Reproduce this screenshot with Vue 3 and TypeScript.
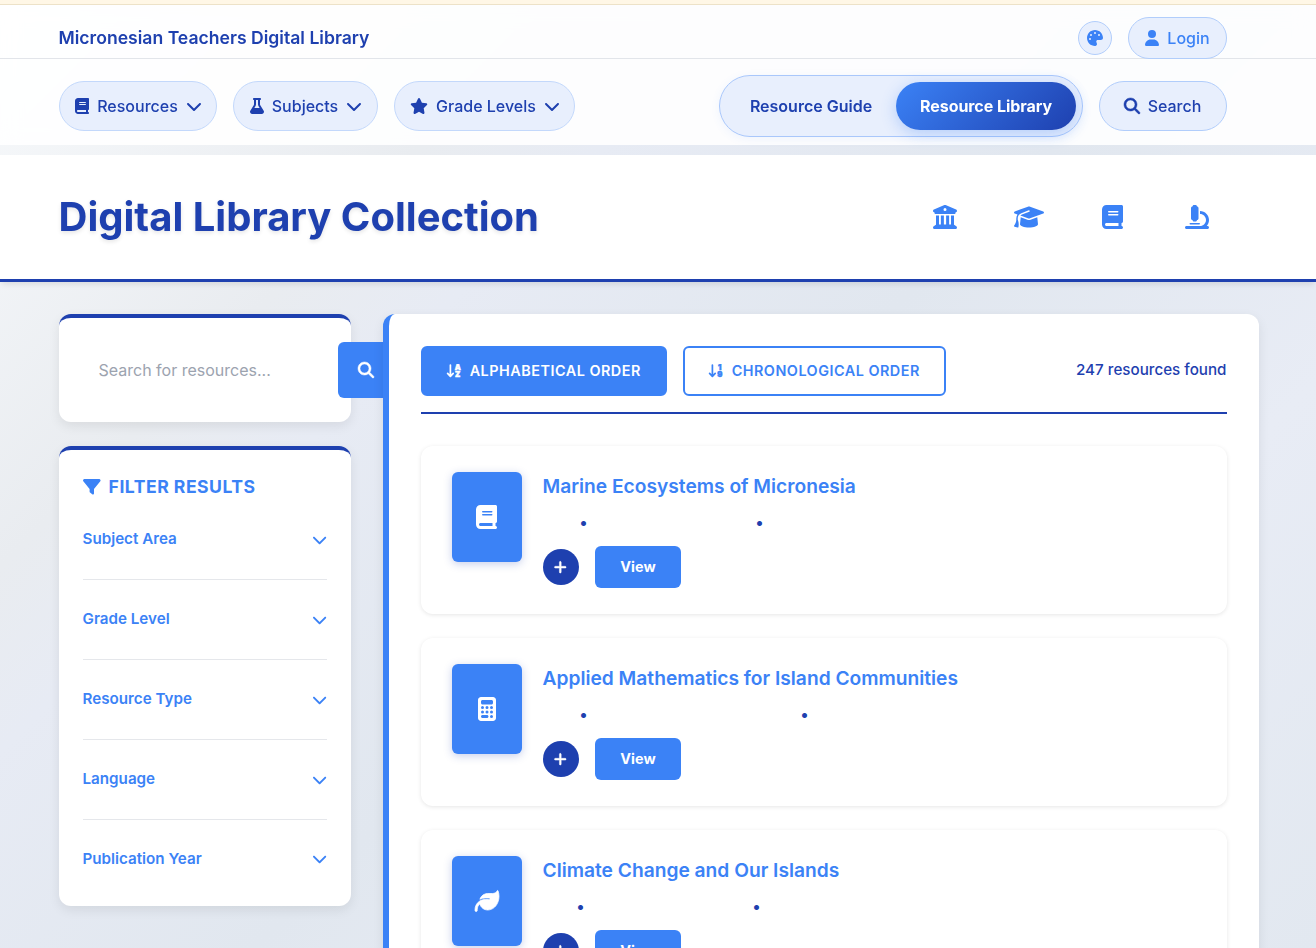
<script setup lang="ts">
interface Glyph { w: number; d: string }

const icons: Record<string, Glyph> = {
  book: { w: 448, d: 'M96 0C43 0 0 43 0 96V416c0 53 43 96 96 96H384h32c17.7 0 32-14.3 32-32s-14.3-32-32-32V384c17.7 0 32-14.3 32-32V32c0-17.7-14.3-32-32-32H384 96zm0 384H352v64H96c-17.7 0-32-14.3-32-32s14.3-32 32-32zm32-240c0-8.8 7.2-16 16-16H336c8.8 0 16 7.2 16 16s-7.2 16-16 16H144c-8.8 0-16-7.2-16-16zm16 48H336c8.8 0 16 7.2 16 16s-7.2 16-16 16H144c-8.8 0-16-7.2-16-16s7.2-16 16-16z' },
  flask: { w: 448, d: 'M288 0H160 128C110.3 0 96 14.3 96 32s14.3 32 32 32V196.8c0 11.8-3.3 23.5-9.5 33.5L10.3 406.2C3.6 417.2 0 429.7 0 442.6C0 480.9 31.1 512 69.4 512H378.6c38.3 0 69.4-31.1 69.4-69.4c0-12.8-3.6-25.4-10.3-36.4L329.5 230.4c-6.2-10.1-9.5-21.7-9.5-33.5V64c17.7 0 32-14.3 32-32s-14.3-32-32-32H288zM192 196.8V64h64V196.8c0 23.7 6.6 46.9 19 67.1L309.5 320h-171L173 263.9c12.4-20.2 19-43.4 19-67.1z' },
  star: { w: 576, d: 'M316.9 18C311.6 7 300.4 0 288.1 0s-23.4 7-28.8 18L195 150.3 51.4 171.5c-12 1.8-22 10.2-25.7 21.7s-.7 24.2 7.9 32.7L137.8 329 113.2 474.7c-2 12 3 24.2 12.9 31.3s23 8 33.8 2.3l128.3-68.5 128.3 68.5c10.8 5.7 23.9 4.9 33.8-2.3s14.9-19.3 12.9-31.3L438.5 329 542.7 225.9c8.6-8.5 11.7-21.2 7.9-32.7s-13.7-19.9-25.7-21.7L381.2 150.3 316.9 18z' },
  chevron: { w: 512, d: 'M233.4 406.6c12.5 12.5 32.8 12.5 45.3 0l192-192c12.5-12.5 12.5-32.8 0-45.3s-32.8-12.5-45.3 0L256 338.7 86.6 169.4c-12.5-12.5-32.8-12.5-45.3 0s-12.5 32.8 0 45.3l192 192z' },
  search: { w: 512, d: 'M416 208c0 45.9-14.9 88.3-40 122.7L502.6 457.4c12.5 12.5 12.5 32.8 0 45.3s-32.8 12.5-45.3 0L330.7 376c-34.4 25.2-76.8 40-122.7 40C93.1 416 0 322.9 0 208S93.1 0 208 0S416 93.1 416 208zM208 352a144 144 0 1 0 0-288 144 144 0 1 0 0 288z' },
  user: { w: 448, d: 'M224 256A128 128 0 1 0 224 0a128 128 0 1 0 0 256zm-45.7 48C79.8 304 0 383.8 0 482.3C0 498.7 13.3 512 29.7 512H418.3c16.4 0 29.7-13.3 29.7-29.7C448 383.8 368.2 304 269.7 304H178.3z' },
  palette: { w: 512, d: 'M512 256c0 .9 0 1.8 0 2.7c-.4 36.5-33.6 61.3-70.1 61.3H344c-26.5 0-48 21.5-48 48c0 3.4 .4 6.7 1 9.9c2.1 10.2 6.5 20 10.8 29.9c6.1 13.8 12.1 27.5 12.1 42c0 31.8-21.6 60.7-53.4 62c-3.5 .1-7 .2-10.6 .2C114.6 512 0 397.4 0 256S114.6 0 256 0S512 114.6 512 256zM128 288a32 32 0 1 0 -64 0 32 32 0 1 0 64 0zm0-96a32 32 0 1 0 0-64 32 32 0 1 0 0 64zM288 96a32 32 0 1 0 -64 0 32 32 0 1 0 64 0zm96 96a32 32 0 1 0 0-64 32 32 0 1 0 0 64z' },
  columns: { w: 512, d: 'M243.4 2.6l-224 96c-14 6-21.8 21-18.7 35.8S16.8 160 32 160v8c0 13.3 10.7 24 24 24H456c13.3 0 24-10.7 24-24v-8c15.2 0 28.3-10.7 31.3-25.6s-4.8-29.9-18.7-35.8l-224-96c-8-3.4-17.2-3.4-25.2 0zM128 224H64V420.3c-.6 .3-1.2 .7-1.8 1.1l-48 32c-11.7 7.8-17 22.4-12.9 35.9S17.9 512 32 512H480c14.1 0 26.5-9.2 30.6-22.7s-1.1-28.1-12.9-35.9l-48-32c-.6-.4-1.2-.7-1.8-1.1V224H384V416H344V224H280V416H232V224H168V416H128V224zM256 64a32 32 0 1 1 0 64 32 32 0 1 1 0-64z' },
  cap: { w: 640, d: 'M320 32c-8.1 0-16.1 1.4-23.7 4.1L15.8 137.4C6.3 140.9 0 149.9 0 160s6.3 19.1 15.8 22.6l57.9 20.9C57.3 229.3 48 259.8 48 291.9v28.1c0 28.4-10.8 57.7-22.3 80.8c-6.5 13-13.9 25.8-22.5 37.6C0 442.7-.9 448.3 .9 453.4s6 8.9 11.2 10.2l64 16c4.2 1.1 8.7 .3 12.4-2s6.3-6.1 7.1-10.4c8.6-42.8 4.3-81.2-2.1-108.7C90.3 344.3 86 329.8 80 316.5V291.9c0-30.2 10.2-58.7 27.9-81.5c12.9-15.5 29.6-28 49.2-35.7l157-61.7c8.2-3.2 17.5 .8 20.7 9s-.8 17.5-9 20.7l-157 61.7c-12.4 4.9-23.3 12.4-32.2 21.6l159.6 57.6c7.6 2.7 15.6 4.1 23.7 4.1s16.1-1.4 23.7-4.1L624.2 182.6c9.5-3.4 15.8-12.5 15.8-22.6s-6.3-19.1-15.8-22.6L343.7 36.1C336.1 33.4 328.1 32 320 32zM128 408c0 35.3 86 72 192 72s192-36.7 192-72L496.7 262.6 354.5 314c-11.1 4-22.8 6-34.5 6s-23.5-2-34.5-6L143.3 262.6 128 408z' },
  microscope: { w: 512, d: 'M160 32c0-17.7 14.3-32 32-32h32c17.7 0 32 14.3 32 32c17.7 0 32 14.3 32 32V288c0 17.7-14.3 32-32 32c0 17.7-14.3 32-32 32H192c-17.7 0-32-14.3-32-32c-17.7 0-32-14.3-32-32V64c0-17.7 14.3-32 32-32zM32 448H320c70.7 0 128-57.3 128-128s-57.3-128-128-128V128c106 0 192 86 192 192c0 49.2-18.5 94-48.9 128H480c17.7 0 32 14.3 32 32s-14.3 32-32 32H320 32c-17.7 0-32-14.3-32-32s14.3-32 32-32zm80-64H304c8.8 0 16 7.2 16 16s-7.2 16-16 16H112c-8.8 0-16-7.2-16-16s7.2-16 16-16z' },
  filter: { w: 512, d: 'M3.9 54.9C10.5 40.9 24.5 32 40 32H472c15.5 0 29.5 8.9 36.1 22.9s4.6 30.5-5.2 42.5L320 320.9V448c0 12.1-6.8 23.2-17.7 28.6s-23.8 4.3-33.5-3l-64-48c-8.1-6-12.8-15.5-12.8-25.6V320.9L9 97.3C-.7 85.4-2.8 68.8 3.9 54.9z' },
  calculator: { w: 384, d: 'M64 0C28.7 0 0 28.7 0 64V448c0 35.3 28.7 64 64 64H320c35.3 0 64-28.7 64-64V64c0-35.3-28.7-64-64-64H64zM96 64H288c17.7 0 32 14.3 32 32v32c0 17.7-14.3 32-32 32H96c-17.7 0-32-14.3-32-32V96c0-17.7 14.3-32 32-32zm32 160a32 32 0 1 1 -64 0 32 32 0 1 1 64 0zM96 352a32 32 0 1 1 0-64 32 32 0 1 1 0 64zM64 416c0-17.7 14.3-32 32-32h96c17.7 0 32 14.3 32 32s-14.3 32-32 32H96c-17.7 0-32-14.3-32-32zM192 256a32 32 0 1 1 0-64 32 32 0 1 1 0 64zm32 64a32 32 0 1 1 -64 0 32 32 0 1 1 64 0zm64-64a32 32 0 1 1 0-64 32 32 0 1 1 0 64zm32 64a32 32 0 1 1 -64 0 32 32 0 1 1 64 0zM288 448a32 32 0 1 1 0-64 32 32 0 1 1 0 64z' },
  leaf: { w: 512, d: 'M272 96c-78.6 0-145.1 51.5-167.7 122.5c33.6-17 71.5-26.5 111.7-26.5h88c8.8 0 16 7.2 16 16s-7.2 16-16 16H288 216s0 0 0 0c-16.6 0-32.7 1.9-48.3 5.4c-25.9 5.9-49.9 16.4-71.4 30.7c0 0 0 0 0 0C38.3 298.8 0 364.9 0 440v16c0 13.3 10.7 24 24 24s24-10.7 24-24V440c0-48.7 20.7-92.5 53.8-123.2C121.6 392.3 190.3 448 272 448l1 0c132.1-.7 239-130.9 239-291.4c0-42.6-7.5-83.1-21.1-119.6c-2.6-6.9-12.7-6.6-16.2-.1C455.9 72.1 418.7 96 376 96L272 96z' },
  plus: { w: 448, d: 'M256 80c0-17.7-14.3-32-32-32s-32 14.3-32 32V224H48c-17.7 0-32 14.3-32 32s14.3 32 32 32H192V432c0 17.7 14.3 32 32 32s32-14.3 32-32V288H400c17.7 0 32-14.3 32-32s-14.3-32-32-32H256V80z' },
}

const menus = [
  { label: 'Resources', icon: 'book', cls: 'm-resources' },
  { label: 'Subjects', icon: 'flask', cls: 'm-subjects' },
  { label: 'Grade Levels', icon: 'star', cls: 'm-grades' },
]
const heroIcons = ['columns', 'cap', 'book', 'microscope']
const filters = ['Subject Area', 'Grade Level', 'Resource Type', 'Language', 'Publication Year']
const sorts = [
  { label: 'Alphabetical Order', top: 'A', bottom: 'Z', active: true },
  { label: 'Chronological Order', top: '1', bottom: '9', active: false },
]
const resources = [
  { title: 'Marine Ecosystems of Micronesia', icon: 'book', cols: [36.6, 167] },
  { title: 'Applied Mathematics for Island Communities', icon: 'calculator', cols: [36.6, 212] },
  { title: 'Climate Change and Our Islands', icon: 'leaf', cols: [33.6, 167] },
]
const box = (name: string) => `0 0 ${icons[name].w} 512`
</script>

<template>
  <div class="page">
    <div class="notice"></div>
    <header class="header">
      <div class="topbar">
        <span class="brand">Micronesian Teachers Digital Library</span>
        <div class="account">
          <button class="pill theme"><svg class="ic" :viewBox="box('palette')"><path :d="icons.palette.d" /></svg></button>
          <button class="pill login"><svg class="ic" :viewBox="box('user')"><path :d="icons.user.d" /></svg>Login</button>
        </div>
      </div>
      <nav class="nav">
        <div class="menus">
          <button v-for="m in menus" :key="m.label" class="pill menu" :class="m.cls">
            <svg class="ic" :viewBox="box(m.icon)"><path :d="icons[m.icon].d" /></svg>
            <span>{{ m.label }}</span>
            <svg class="ic chev" :viewBox="box('chevron')"><path :d="icons.chevron.d" /></svg>
          </button>
        </div>
        <div class="right">
          <div class="switch">
            <a class="tab">Resource Guide</a>
            <a class="tab on">Resource Library</a>
          </div>
          <button class="pill find"><svg class="ic heavy" :viewBox="box('search')"><path :d="icons.search.d" /></svg>Search</button>
        </div>
      </nav>
    </header>

    <section class="hero">
      <h1>Digital Library Collection</h1>
      <div class="hero-icons">
        <span v-for="h in heroIcons" :key="h"><svg class="ic" :viewBox="box(h)"><path :d="icons[h].d" /></svg></span>
      </div>
    </section>

    <div class="layout">
      <aside class="side">
        <div class="card searchbox">
          <span class="placeholder">Search for resources...</span>
          <button class="go"><svg class="ic heavy" :viewBox="box('search')"><path :d="icons.search.d" /></svg></button>
        </div>
        <div class="card filters">
          <h3><svg class="ic" :viewBox="box('filter')"><path :d="icons.filter.d" /></svg>Filter Results</h3>
          <div v-for="f in filters" :key="f" class="frow">
            <span>{{ f }}</span>
            <svg class="ic" :viewBox="box('chevron')"><path :d="icons.chevron.d" /></svg>
          </div>
        </div>
      </aside>

      <main class="main">
        <div class="toolbar">
          <button v-for="s in sorts" :key="s.label" class="sort" :class="{ active: s.active }">
            <svg class="sort-ic" viewBox="0 0 16 14">
              <path d="M4.4 1v11M1.6 9.4l2.8 3 2.8-3" />
              <text x="11.7" y="6.2">{{ s.top }}</text>
              <text x="11.7" y="13.1">{{ s.bottom }}</text>
            </svg>
            <span>{{ s.label }}</span>
          </button>
          <span class="count">247 resources found</span>
        </div>
        <article v-for="r in resources" :key="r.title" class="item">
          <div class="thumb"><svg class="ic" :class="{ heavy: r.icon === 'leaf' }" :viewBox="box(r.icon)"><path :d="icons[r.icon].d" /></svg></div>
          <div class="body">
            <h4>{{ r.title }}</h4>
            <div class="meta">
              <span v-for="(c, i) in r.cols" :key="i" class="dot" :style="{ paddingLeft: c + 'px' }">•</span>
            </div>
            <div class="actions">
              <button class="add"><svg class="ic heavy" :viewBox="box('plus')"><path :d="icons.plus.d" /></svg></button>
              <button class="view">View</button>
            </div>
          </div>
        </article>
      </main>
    </div>
  </div>
</template>

<style>
html, body { height: 948px; overflow: hidden; }
</style>

<style scoped>
* { box-sizing: border-box; }
.page {
  height: 948px; overflow: hidden;
  font-family: Inter, "Liberation Sans", sans-serif;
  font-size: 16px; color: #1e40af;
  background: linear-gradient(135deg, #f8fafc 0, #e9ecf0 400px, #e7ebf4 530px, #e1e7ef 850px, #e8ecf5 1200px, #e2e8f0 1600px);
}
button { font-family: inherit; margin: 0; padding: 0; border: 0; background: none; color: inherit; }
.ic { display: block; height: 1em; fill: currentColor; flex: none; overflow: visible; }
.ic.heavy { stroke: currentColor; stroke-width: 16; }
.notice { height: 5px; background: #fff7e6; border-bottom: 1px solid #ede2c8; }
.header { height: 140px; background: rgba(255, 255, 255, .9); backdrop-filter: blur(10px); }
.topbar {
  height: 54px; padding: 0 89.5px 0 58.5px; border-bottom: 1px solid #e2e5ea;
  display: flex; justify-content: space-between; align-items: flex-start;
}
.brand { font-size: 17.6px; font-weight: 600; line-height: 22px; margin-top: 22px; }
.account { display: flex; gap: 16px; align-items: center; margin-top: 12px; color: #3b82f6; }
.pill {
  display: flex; align-items: center; justify-content: center; gap: 8px;
  border: 1px solid #c3d8fb; border-radius: 25px; background: #e8effd;
  font-size: 16px; font-weight: 500; white-space: nowrap;
}
.account .pill, .find { border-color: #b1cdfb; }
.theme { width: 34px; height: 34px; }
.login { width: 99px; height: 42px; padding-left: 1px; }
.nav { height: 86px; padding: 0 89.5px 0 58.5px; display: flex; justify-content: space-between; align-items: center; margin-top: 4px; }
.menus, .right { display: flex; gap: 16px; align-items: center; }
.menu, .find { height: 50px; }
.menu { gap: 8px; padding-left: 2px; }
.m-resources { width: 158px; }
.m-subjects { width: 145px; }
.m-grades { width: 181px; }
.find { width: 128px; }
.pill .ic { height: 16px; }
.switch {
  width: 364px; height: 62px; padding: 6px; border: 1px solid #a9c7fb; border-radius: 31px;
  background: #e8effd; display: flex; box-shadow: 0 2px 10px rgba(59, 130, 246, .08);
}
.tab { flex: 1; display: flex; align-items: center; justify-content: center; padding-left: 1px; font-weight: 600; white-space: nowrap; }
.tab.on {
  flex: none; width: 180px; border-radius: 24px; color: #fff; font-weight: 700; letter-spacing: -.06px;
  background: linear-gradient(135deg, #3b82f6, #1e40af); box-shadow: 0 4px 15px rgba(59, 130, 246, .3);
}
.hero {
  position: relative; margin-top: 10px; height: 127px; padding: 0 89.5px 0 58.5px; background: #fff;
  border-bottom: 3px solid #1e40af; box-shadow: 0 4px 6px -2px rgba(0, 0, 0, .1);
  display: flex; justify-content: space-between; align-items: center;
}
h1 { margin: 0; font-size: 40px; font-weight: 700; line-height: 48px; text-shadow: 0 2px 4px rgba(0, 0, 0, .1); }
.hero-icons { display: flex; gap: 24px; color: #3b82f6; font-size: 24px; }
.hero-icons span { width: 60px; display: flex; justify-content: center; }
.layout { display: flex; gap: 32px; padding: 32px 57.5px 0 58.5px; align-items: flex-start; }
.side { width: 292px; flex: none; display: flex; flex-direction: column; gap: 24px; }
.card { background: #fff; border-top: 4px solid #1e40af; border-radius: 12px; box-shadow: 0 4px 12px rgba(0, 0, 0, .08); }
.searchbox { height: 108px; display: flex; align-items: center; }
.placeholder { width: 279px; padding-left: 40px; flex: none; color: #9ca3af; }
.go {
  width: 56px; height: 56px; flex: none; border-radius: 6px; background: #3b82f6; color: #fff;
  display: flex; align-items: center; justify-content: center; font-size: 16px;
}
.filters { height: 460px; padding: 24px 24px 0; color: #3b82f6; }
h3 {
  margin: 0 0 12px; height: 25px; display: flex; align-items: center; gap: 8.5px;
  font-size: 17.6px; font-weight: 700; text-transform: uppercase; letter-spacing: .5px;
}
.frow { height: 80px; display: flex; justify-content: space-between; font-size: 15.2px; font-weight: 600; border-bottom: 1px solid #e5e7eb; }
.frow + .frow { padding-top: 28px; }
.frow:nth-child(2) { height: 69px; padding-top: 17px; }
.frow:last-child { border-bottom: 0; }
.frow span { line-height: 22px; }
.frow .ic { margin: 4px -.7px 0 0; height: 15.2px; }
.frow:last-child .ic { margin-top: 3px; }
.main {
  position: relative; flex: 1; height: 1000px; padding: 32px 32px 0; background: #fff;
  border-left: 6px solid #3b82f6; border-radius: 12px; box-shadow: 0 4px 12px rgba(0, 0, 0, .08);
}
.toolbar { display: flex; gap: 16px; height: 68px; border-bottom: 2px solid #1e40af; margin-bottom: 32px; }
.sort {
  width: 263px; height: 50px; border: 2px solid #3b82f6; border-radius: 6px; color: #3b82f6;
  display: flex; align-items: center; justify-content: center; gap: 7.5px; padding-bottom: 1px;
  font-size: 14.4px; font-weight: 600; text-transform: uppercase; letter-spacing: .5px; white-space: nowrap;
}
.sort.active { width: 246px; background: #3b82f6; color: #fff; }
.sort-ic { width: 16px; height: 14px; flex: none; }
.sort-ic path { fill: none; stroke: currentColor; stroke-width: 1.7; stroke-linecap: round; stroke-linejoin: round; }
.sort-ic text { font-size: 7.6px; font-weight: 900; letter-spacing: 0; text-anchor: middle; fill: currentColor; stroke: currentColor; stroke-width: .5; }
.count { margin-left: auto; line-height: 48px; font-size: 15.2px; font-weight: 500; }
.item {
  height: 168px; margin-bottom: 24px; padding: 26px 31px; border-radius: 12px; background: #fff;
  display: flex; gap: 21px; box-shadow: 0 1px 4px rgba(0, 0, 0, .1);
}
.thumb {
  width: 70px; height: 90px; flex: none; border-radius: 6px; background: #3b82f6; color: #fff; font-size: 24px;
  display: flex; align-items: center; justify-content: center; box-shadow: 0 2px 8px rgba(30, 64, 175, .25);
}
h4 { margin: 0; font-size: 19.2px; font-weight: 600; line-height: 28px; color: #3b82f6; white-space: nowrap; }
.meta { height: 46px; display: flex; font-size: 16px; line-height: 45px; }
.dot { white-space: nowrap; }
.actions { display: flex; align-items: center; gap: 16px; }
.add { width: 36px; height: 36px; border-radius: 50%; background: #1e40af; color: #fff; font-size: 14.4px; display: flex; align-items: center; justify-content: center; }
.view { width: 86px; height: 42px; padding: 0 0 1px 1px; border-radius: 6px; background: #3b82f6; color: #fff; font-size: 14.4px; font-weight: 700; }
</style>
